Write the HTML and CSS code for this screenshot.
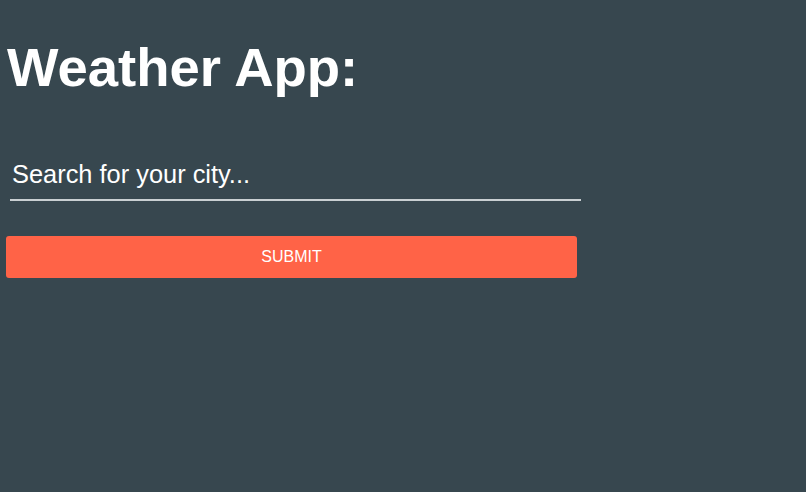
FILE: index.html
```html
<!DOCTYPE html>
<html lang="en">
<head>
<meta charset="utf-8">
<title>Weather App</title>
<link rel="stylesheet" href="styles.css">
</head>
<body>
<main class="app">
  <h1 class="title">Weather App:</h1>
  <form class="search-form">
    <input class="city-input" type="text" placeholder="Search for your city...">
    <button class="submit-btn" type="button">SUBMIT</button>
  </form>
</main>
</body>
</html>
```

FILE: styles.css
```css
html, body {
  margin: 0;
  padding: 0;
  background: #37474f;
  height: 100%;
}

body {
  font-family: "Liberation Sans", Arial, sans-serif;
  color: #fff;
}

.app {
  padding: 37px 0 0 6px;
}

.title {
  margin: 0;
  font-size: 54.5px;
  line-height: 62px;
  font-weight: 700;
  color: #fff;
  padding-left: 1px;
}

.search-form {
  display: flex;
  flex-direction: column;
  align-items: flex-start;
  margin-top: 57px;
}

.city-input {
  box-sizing: border-box;
  margin-left: 4px;
  width: 571px;
  height: 45px;
  padding: 0 0 6px 2px;
  border: none;
  border-bottom: 2px solid #c9cfd2;
  background: transparent;
  color: #fff;
  font-family: "Liberation Sans", Arial, sans-serif;
  font-size: 25.4px;
  outline: none;
}

.city-input::placeholder {
  color: #fff;
  opacity: 1;
}

.submit-btn {
  margin-top: 35px;
  width: 571px;
  height: 42px;
  border: none;
  border-radius: 3px;
  background: #ff6347;
  color: #fff;
  font-family: "Liberation Sans", Arial, sans-serif;
  font-size: 16px;
  padding: 0;
}
```
